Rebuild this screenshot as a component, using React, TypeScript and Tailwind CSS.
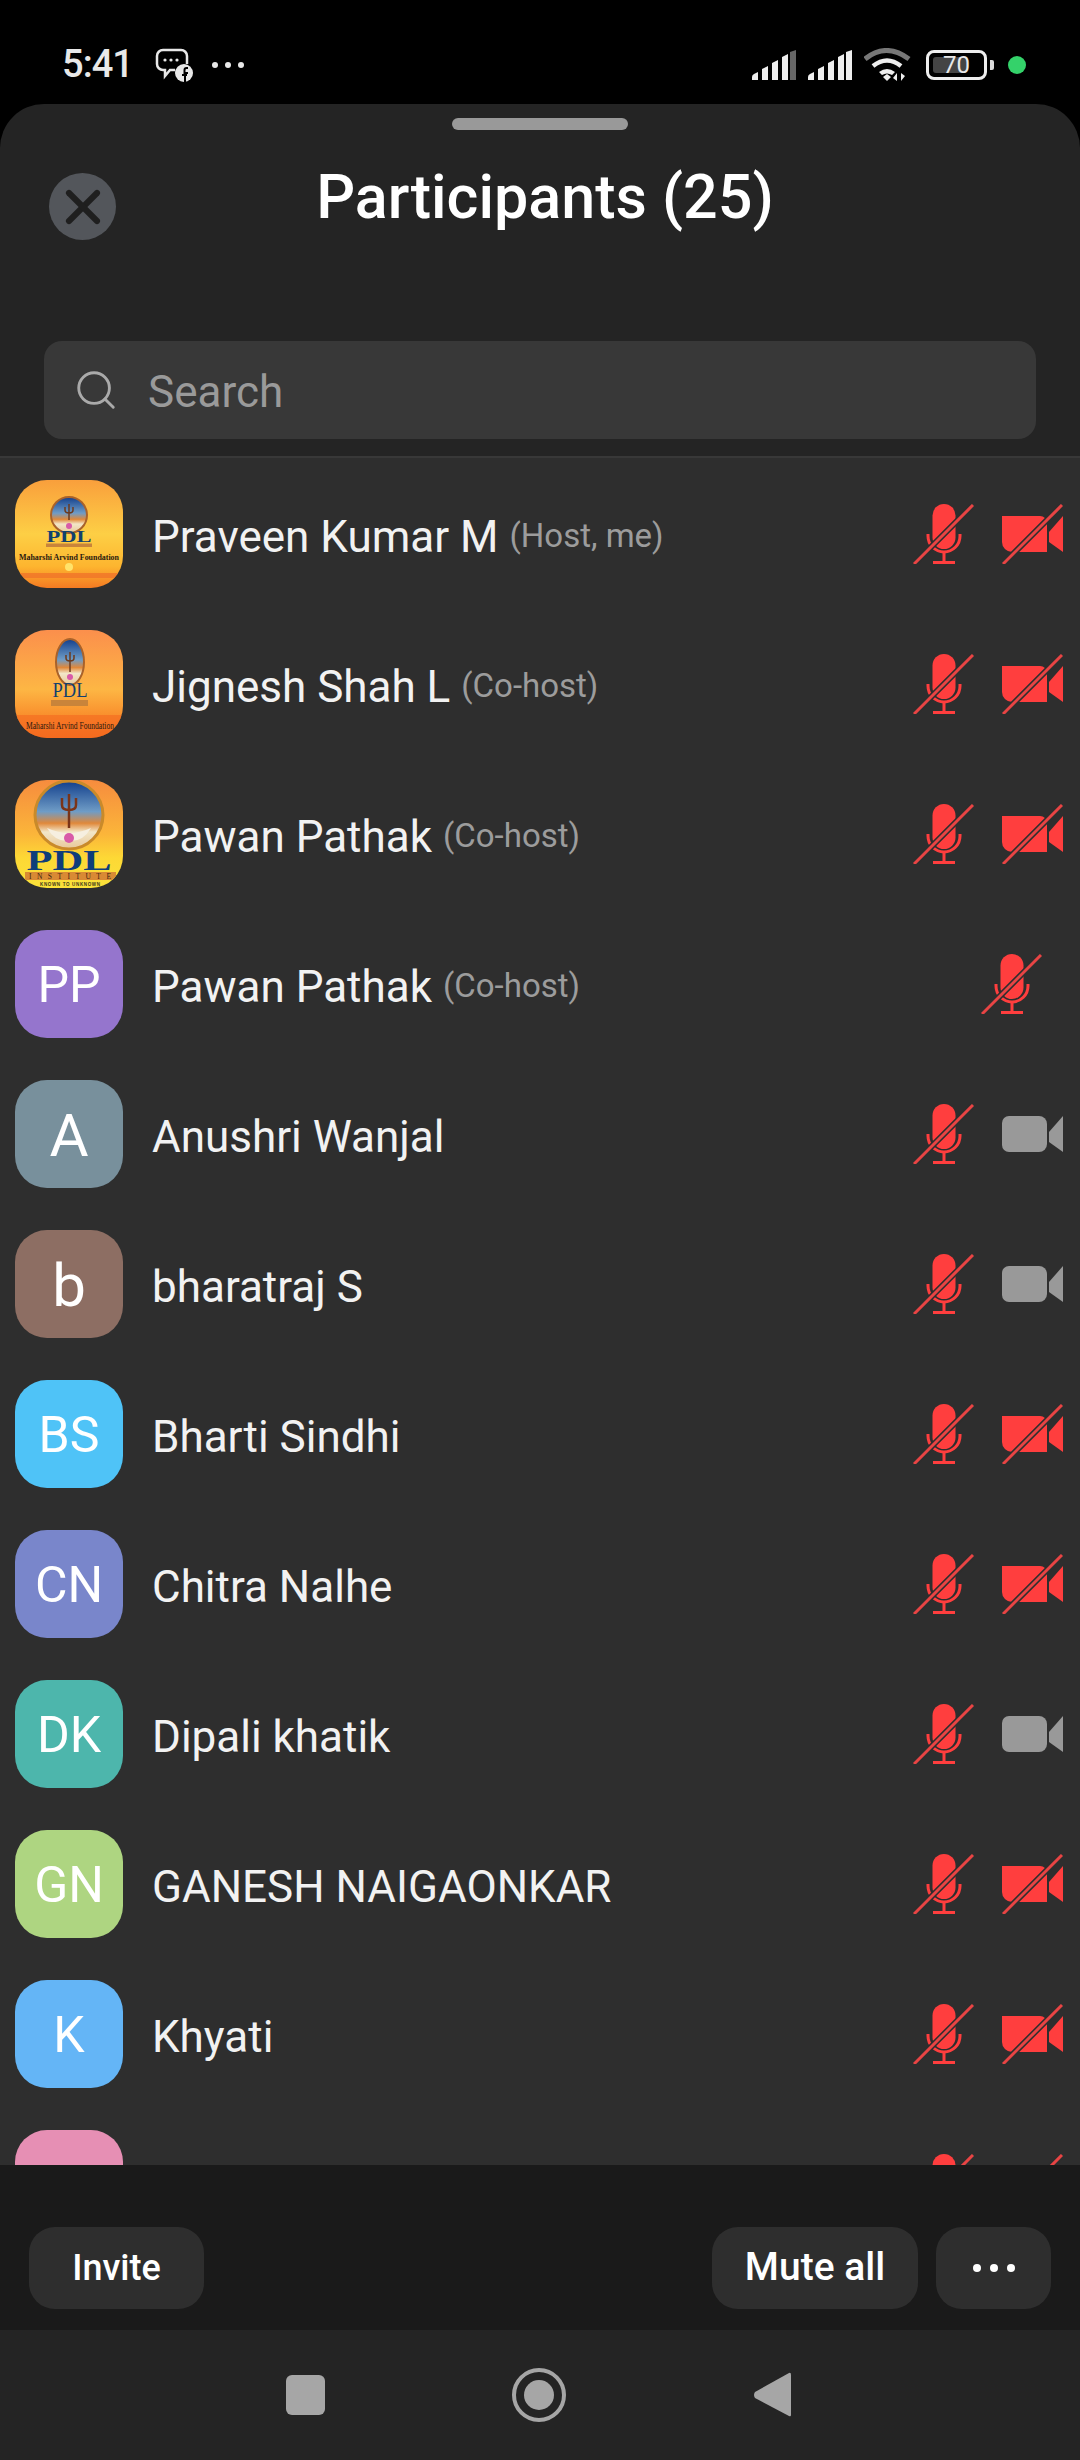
import React from 'react';
import { Search, X } from 'lucide-react';

type Person = {
  name: string;
  tag?: string;
  initials?: string;
  color?: string;
  big?: boolean;
  logo?: 1 | 2 | 3;
  cam: 'off' | 'on' | 'none';
};

const people: Person[] = [
  { name: 'Praveen Kumar M', tag: '(Host, me)', logo: 1, cam: 'off' },
  { name: 'Jignesh Shah L', tag: '(Co-host)', logo: 2, cam: 'off' },
  { name: 'Pawan Pathak', tag: '(Co-host)', logo: 3, cam: 'off' },
  { name: 'Pawan Pathak', tag: '(Co-host)', initials: 'PP', color: 'bg-[#9575cd]', cam: 'none' },
  { name: 'Anushri Wanjal', initials: 'A', color: 'bg-[#78909c]', big: true, cam: 'on' },
  { name: 'bharatraj S', initials: 'b', color: 'bg-[#8d6e63]', big: true, cam: 'on' },
  { name: 'Bharti Sindhi', initials: 'BS', color: 'bg-[#4fc3f7]', cam: 'off' },
  { name: 'Chitra Nalhe', initials: 'CN', color: 'bg-[#7986cb]', cam: 'off' },
  { name: 'Dipali khatik', initials: 'DK', color: 'bg-[#4db6ac]', cam: 'on' },
  { name: 'GANESH NAIGAONKAR', initials: 'GN', color: 'bg-[#aed581]', cam: 'off' },
  { name: 'Khyati', initials: 'K', color: 'bg-[#64b5f6]', cam: 'off' },
  { name: '', initials: '', color: 'bg-[#e68fb4]', cam: 'off' },
];

const Slash = () => (
  <>
    <path d="M0 61 61 0" stroke="#2e2e2e" strokeWidth="6" />
    <path d="M1 60 60 1" stroke="#e84444" strokeWidth="3" />
  </>
);

const MicOff = () => (
  <svg width="61" height="60" viewBox="0 0 61 60" className="shrink-0">
    <rect x="19.500" y="0" width="23" height="45" rx="11.500" fill="#ff3e3e" />
    <path d="M15 30v2a16 16 0 0 0 32 0v-2" fill="none" stroke="#ff3e3e" strokeWidth="3" />
    <path d="M31 48v11M20 58.500h22" fill="none" stroke="#ff3e3e" strokeWidth="3" />
    <Slash />
  </svg>
);

const CamOff = () => (
  <svg width="61" height="60" viewBox="0 0 61 60" className="shrink-0">
    <path d="M0 12h38a7 7 0 0 1 7 7v29H10a10 10 0 0 1-10-10z" fill="#ff3e3e" />
    <path d="M47 28 61 12v36L47 38z" fill="#ff3e3e" />
    <Slash />
  </svg>
);

const CamOn = () => (
  <svg width="61" height="60" viewBox="0 0 61 60" className="shrink-0">
    <path d="M7 12h30a8 8 0 0 1 8 8v20a8 8 0 0 1-8 8H7a7 7 0 0 1-7-7V19a7 7 0 0 1 7-7z" fill="#999" />
    <path d="M47 28 61 12v36L47 38z" fill="#999" />
  </svg>
);

// hand drawn stand-ins for the PDL profile photos
const Logo = ({ kind }: { kind: 1 | 2 | 3 }) => {
  const id = `sky${kind}`;
  return (
    <svg width="108" height="108" viewBox="0 0 108 108" className="block">
      <defs>
        {kind === 1 && (
          <linearGradient id={id} x1="0" y1="0" x2="0" y2="1">
            <stop offset="0" stopColor="#f99f3c" />
            <stop offset="0.5" stopColor="#fdcf45" />
            <stop offset="0.8" stopColor="#fdb52f" />
            <stop offset="1" stopColor="#f47a22" />
          </linearGradient>
        )}
        {kind === 2 && (
          <linearGradient id={id} x1="0" y1="0" x2="0" y2="1">
            <stop offset="0" stopColor="#fb8f4c" />
            <stop offset="0.55" stopColor="#fdb644" />
            <stop offset="0.8" stopColor="#f98e2c" />
            <stop offset="1" stopColor="#f4701f" />
          </linearGradient>
        )}
        {kind === 3 && (
          <linearGradient id={id} x1="0" y1="0" x2="0" y2="1">
            <stop offset="0" stopColor="#f68c3e" />
            <stop offset="0.5" stopColor="#fbb53a" />
            <stop offset="0.72" stopColor="#fdd835" />
            <stop offset="1" stopColor="#fbe23a" />
          </linearGradient>
        )}
        <linearGradient id={`${id}e`} x1="0" y1="0" x2="0" y2="1">
          <stop offset="0" stopColor="#123f8c" />
          <stop offset="0.45" stopColor="#6f9cc6" />
          <stop offset="0.62" stopColor="#e0883a" />
          <stop offset="0.75" stopColor="#f2e6c8" />
          <stop offset="1" stopColor="#e8c89a" />
        </linearGradient>
      </defs>
      <rect width="108" height="108" fill={`url(#${id})`} />
      {kind === 1 && (
        <>
          <circle cx="54" cy="35" r="18" fill={`url(#${id}e)`} stroke="#a9622a" strokeWidth="2" />
          <path d="M54 24v16M50 27v3q0 3 4 3t4-3v-3" stroke="#6b3a1e" strokeWidth="1.500" fill="none" />
          <circle cx="54" cy="46" r="3" fill="#d85aa8" />
          <text x="54" y="62" textAnchor="middle" fontFamily="Liberation Serif" fontWeight="700" fontSize="16" fill="#12406e" textLength="45" lengthAdjust="spacingAndGlyphs">PDL</text>
          <rect x="31" y="63.500" width="46" height="3.500" fill="#c9843a" />
          <text x="54" y="80" textAnchor="middle" fontFamily="Liberation Serif" fontWeight="700" fontSize="8" fill="#2a1a10" textLength="100" lengthAdjust="spacingAndGlyphs">Maharshi Arvind Foundation</text>
          <circle cx="54" cy="87" r="4" fill="#ffe36a" />
          <rect y="93" width="108" height="5" fill="#ef6f2a" opacity="0.7" />
        </>
      )}
      {kind === 2 && (
        <>
          <ellipse cx="55" cy="32" rx="14" ry="23" fill={`url(#${id}e)`} stroke="#a9622a" strokeWidth="2" />
          <path d="M55 22v20M51 25v3q0 3 4 3t4-3v-3" stroke="#6b3a1e" strokeWidth="1.500" fill="none" />
          <circle cx="55" cy="47" r="3" fill="#d85aa8" />
          <text x="55" y="67" textAnchor="middle" fontFamily="Liberation Serif" fontSize="21" fill="#12406e" textLength="35" lengthAdjust="spacingAndGlyphs">PDL</text>
          <rect x="36" y="70" width="37" height="6" fill="#c9843a" />
          <rect y="85" width="108" height="23" fill="#f4661f" opacity="0.55" />
          <text x="55" y="99" textAnchor="middle" fontFamily="Liberation Serif" fontSize="9.500" fill="#2a1a10" textLength="88" lengthAdjust="spacingAndGlyphs">Maharshi Arvind Foundation</text>
        </>
      )}
      {kind === 3 && (
        <>
          <circle cx="54" cy="35" r="34" fill={`url(#${id}e)`} stroke="#c98a2a" strokeWidth="3" />
          <path d="M54 14v34M47 18v7q0 5 7 5t7-5v-7" stroke="#7a3418" strokeWidth="2.500" fill="none" />
          <path d="M32 48q22 10 44 0-8 14-22 13-14 1-22-13z" fill="#f6efe0" />
          <circle cx="54" cy="58" r="5" fill="#d85aa8" />
          <text x="54" y="90" textAnchor="middle" fontFamily="Liberation Serif" fontWeight="700" fontSize="29" fill="#0f3d7a" textLength="85" lengthAdjust="spacingAndGlyphs">PDL</text>
          <rect x="10" y="92" width="91" height="8" fill="#d98a34" />
          <text x="55" y="99" textAnchor="middle" fontFamily="Liberation Serif" fontSize="7.500" fill="#3a2410" textLength="82" lengthAdjust="spacing">INSTITUTE</text>
          <text x="55" y="106" textAnchor="middle" fontFamily="Liberation Sans" fontWeight="700" fontSize="4.500" fill="#3a3a1a" textLength="60" lengthAdjust="spacing">KNOWN TO UNKNOWN</text>
        </>
      )}
    </svg>
  );
};

const Row = ({ p }: { p: Person }) => (
  <div className="h-[150px] shrink-0 flex items-center pl-[15px] pr-[17px]">
    <div className={`w-[108px] h-[108px] rounded-[32px] overflow-hidden shrink-0 flex items-center justify-center text-white ${p.logo ? '' : 'pt-[3px]'} ${p.big ? 'text-[60px]' : 'text-[50px]'} ${p.color ?? ''}`}>
      {p.logo ? <Logo kind={p.logo} /> : p.initials}
    </div>
    <div className="flex-1 min-w-0 ml-[29px] flex items-baseline gap-[11px] mt-[5px]">
      <span className="text-[44px] text-[#f2f2f2] whitespace-nowrap">{p.name}</span>
      {p.tag && <span className="text-[33px] text-[#9c9c9c] whitespace-nowrap relative -top-[5px]">{p.tag}</span>}
    </div>
    {p.cam === 'none' ? (
      <div className="w-[104px] flex justify-center shrink-0">
        <MicOff />
      </div>
    ) : (
      <div className="flex gap-[28px] shrink-0">
        <MicOff />
        {p.cam === 'off' ? <CamOff /> : <CamOn />}
      </div>
    )}
  </div>
);

const Bars = ({ dim }: { dim?: boolean }) => (
  <svg width="44" height="30" viewBox="0 0 44 30">
    <path d="M0 30v-3q0-2 2-3l4-2v8zM10 30V19l6-3v14zM20 30V13l6-3v20zM30 30V7l6-3v26z" fill="#eee" />
    <path d="M38 30V2l6-2v30z" fill={dim ? '#666' : '#eee'} />
  </svg>
);

export default function App() {
  return (
    <div className="w-[1080px] h-[2460px] bg-black flex flex-col overflow-hidden font-['Roboto',sans-serif]">
      {/* status bar */}
      <div className="h-[104px] shrink-0 flex items-center pt-[25px] pl-[62px] pr-[54px] text-[#e8e8e8]">
        <span className="text-[38px] font-medium tracking-tight">5:41</span>
        <svg width="40" height="34" viewBox="0 0 40 34" className="ml-[22px]">
          <path d="M8 2h18a6 6 0 0 1 6 6v8M20 22h-5l-5 6v-6H8a6 6 0 0 1-6-6V8a6 6 0 0 1 6-6" fill="none" stroke="#e8e8e8" strokeWidth="2.500" />
          <circle cx="10" cy="12" r="1.600" fill="#e8e8e8" />
          <circle cx="16" cy="12" r="1.600" fill="#e8e8e8" />
          <circle cx="22" cy="12" r="1.600" fill="#e8e8e8" />
          <circle cx="29" cy="25" r="9" fill="#e8e8e8" />
          <path d="M30 34v-9h3M27 27h5M33 20h-1.500q-2 0-2 2v4" fill="none" stroke="#000" strokeWidth="2" />
        </svg>
        <svg width="34" height="8" viewBox="0 0 34 8" className="ml-[16px]">
          <circle cx="4" cy="4" r="3" fill="#e8e8e8" />
          <circle cx="17" cy="4" r="3" fill="#e8e8e8" />
          <circle cx="30" cy="4" r="3" fill="#e8e8e8" />
        </svg>
        <div className="ml-auto flex items-center">
          <Bars dim />
          <div className="ml-[12px]">
            <Bars />
          </div>
          <svg width="48" height="34" viewBox="0 0 48 34" className="ml-[12px]">
            <path d="M1 11q21-17 44 0" fill="none" stroke="#777" strokeWidth="5" />
            <path d="M9 18q14-11 28 0" fill="none" stroke="#eee" strokeWidth="4.500" />
            <path d="M15 24q8-6 16 0l-3 3q-5-3-10 0z" fill="#eee" />
            <path d="M19 29l4-3 4 3-4 4zM33 33v-8l-4 5zM37 25v8l4-5z" fill="#eee" />
          </svg>
          <div className="ml-[14px] w-[61px] h-[30px] rounded-[8px] border-[3px] border-[#eee] relative flex items-center justify-center text-[24px] leading-none">
            <div className="absolute left-[4px] top-[4px] bottom-[4px] w-[34px] rounded-[3px] bg-[#444]" />
            <span className="relative">70</span>
          </div>
          <div className="ml-[3px] w-[4px] h-[10px] rounded-r-[2px] bg-[#ddd]" />
          <div className="ml-[14px] w-[18px] h-[18px] rounded-full bg-[#34d26a]" />
        </div>
      </div>

      {/* sheet */}
      <div className="flex-1 min-h-0 bg-[#242424] rounded-t-[44px] flex flex-col overflow-hidden">
        <div className="h-[14px] shrink-0 mt-[14px] flex justify-center">
          <div className="w-[176px] h-[12px] rounded-full bg-[#999]" />
        </div>
        <div className="h-[307px] shrink-0 flex flex-col px-[44px]">
          <div className="grid grid-cols-[1fr_auto_1fr] items-start mt-[27px]">
            <div className="w-[67px] h-[67px] mt-[14px] ml-[5px] rounded-full bg-[#53565b] flex items-center justify-center">
              <X size={56} strokeWidth={2.600} color="#1f1f1f" />
            </div>
            <h1 className="text-[61px] font-medium text-white leading-[76px] ml-[10px]">Participants (25)</h1>
            <div />
          </div>
          <div className="mt-auto h-[98px] rounded-[18px] bg-[#383838] flex items-center pl-[29px] gap-[29px]">
            <Search size={46} strokeWidth={1.500} color="#aaa" />
            <span className="text-[44px] text-[#9a9a9a] mt-[3px]">Search</span>
          </div>
        </div>

        {/* list */}
        <div className="mt-[17px] pt-[1px] flex-1 min-h-0 bg-[#2e2e2e] border-t-[2px] border-[#383838] flex flex-col overflow-hidden">
          {people.map((p, i) => (
            <Row key={i} p={p} />
          ))}
        </div>

        {/* actions */}
        <div className="h-[165px] shrink-0 bg-[#1a1a1a] flex items-center pl-[29px] pr-[29px] pt-[40px]">
          <button className="w-[175px] h-[82px] rounded-[26px] bg-[#2e2e2e] text-white text-[36px] font-medium">Invite</button>
          <button className="ml-auto w-[206px] h-[82px] rounded-[26px] bg-[#2e2e2e] text-white text-[39px] font-medium">Mute all</button>
          <button className="ml-[18px] w-[115px] h-[82px] rounded-[26px] bg-[#2e2e2e] flex items-center justify-center gap-[9px]">
            <span className="w-[8px] h-[8px] rounded-full bg-white" />
            <span className="w-[8px] h-[8px] rounded-full bg-white" />
            <span className="w-[8px] h-[8px] rounded-full bg-white" />
          </button>
        </div>

        {/* nav */}
        <div className="h-[130px] shrink-0 bg-[#242424] flex items-center justify-center pr-[4px]">
          <div className="w-[39px] h-[40px] rounded-[6px] bg-[#a6a6a6]" />
          <div className="ml-[187px] w-[54px] h-[54px] rounded-full border-[4px] border-[#a6a6a6] flex items-center justify-center">
            <div className="w-[30px] h-[30px] rounded-full bg-[#a6a6a6]" />
          </div>
          <svg width="38" height="46" viewBox="0 0 38 46" className="ml-[187px]">
            <path d="M36 1q2-1 2 2v40q0 2-2 1L2 26q-2-3 0-6z" fill="#a6a6a6" />
          </svg>
        </div>
      </div>
    </div>
  );
}
